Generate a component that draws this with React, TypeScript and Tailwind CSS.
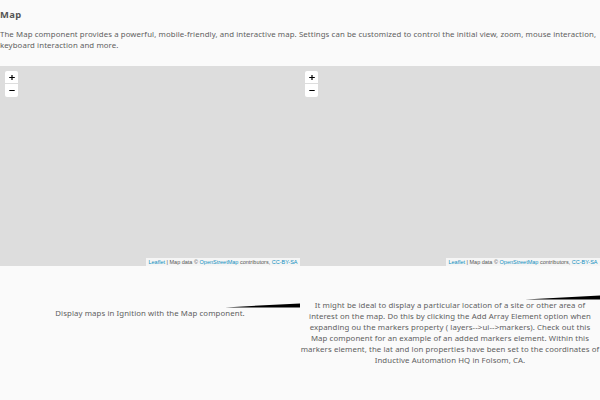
const paragraph = [
  'It might be ideal to display a particular location of a site or other area of',
  'interest on the map. Do this by clicking the Add Array Element option when',
  'expanding ou the markers property ( layers-->ui-->markers). Check out this',
  'Map component for an example of an added markers element. Within this',
  'markers element, the lat and lon properties have been set to the coordinates of',
  'Inductive Automation HQ in Folsom, CA.',
];

function ZoomControl() {
  return (
    <div className="ml-[5px] mt-[5px] flex w-[13px] flex-col overflow-hidden rounded-[2px] bg-white">
      <button className="flex h-[13px] items-center justify-center border-b border-[#ddd]" aria-label="Zoom in">
        <svg width="13" height="12" viewBox="0 0 13 12">
          <path d="M4.2 6.5h5.6M7 4v5" stroke="#000" strokeWidth="1.2" />
        </svg>
      </button>
      <button className="flex h-[13px] items-center justify-center" aria-label="Zoom out">
        <svg width="13" height="13" viewBox="0 0 13 13">
          <path d="M4.3 6.5h5.4" stroke="#000" strokeWidth="1" />
        </svg>
      </button>
    </div>
  );
}

function MapView() {
  return (
    <div className="flex h-[200px] w-[300px] flex-col justify-between bg-[#ddd]">
      <ZoomControl />
      <div className="h-[8px] w-[154px] self-end whitespace-nowrap bg-white/70 pl-[2.5px] font-['Liberation_Sans',sans-serif] text-[5.5px] leading-[8px] text-[#555]">
        <a className="text-[#0f8fc0]">Leaflet</a> | Map data © <a className="text-[#0f8fc0]">OpenStreetMap</a> contributors, <a className="text-[#0f8fc0]">CC-BY-SA</a>
      </div>
    </div>
  );
}

function Wedge() {
  return (
    <svg className="block self-end" width="75" height="5" viewBox="0 0 75 5">
      <path d="M0 4.4L75 0.4V4.4Z" fill="#000" />
    </svg>
  );
}

export default function App() {
  return (
    <main className="h-[400px] w-[600px] overflow-hidden bg-[#fafafa] font-['Noto_Sans',sans-serif] text-[7.8px] leading-[11px] tracking-[0.1px] text-[#606060]">
      <header className="h-[66px] whitespace-nowrap pt-[9px]">
        <h1 className="text-[9.4px] font-bold leading-[12px] tracking-[0.45px] text-[#555]">Map</h1>
        <p className="mt-[8px] tracking-[0.104px]">
          The Map component provides a powerful, mobile-friendly, and interactive map. Settings can be customized to control the initial view, zoom, mouse interaction,
          <br />
          keyboard interaction and more.
        </p>
      </header>
      <div className="flex tracking-normal">
        <MapView />
        <MapView />
      </div>
      <div className="flex">
        <section className="flex w-[300px] flex-col pt-[37px]">
          <Wedge />
          <p className="text-center">Display maps in Ignition with the Map component.</p>
        </section>
        <section className="flex w-[300px] flex-col pt-[29px]">
          <Wedge />
          <div className="whitespace-nowrap text-center">
            {paragraph.map((line) => (
              <p key={line}>{line}</p>
            ))}
          </div>
        </section>
      </div>
    </main>
  );
}
